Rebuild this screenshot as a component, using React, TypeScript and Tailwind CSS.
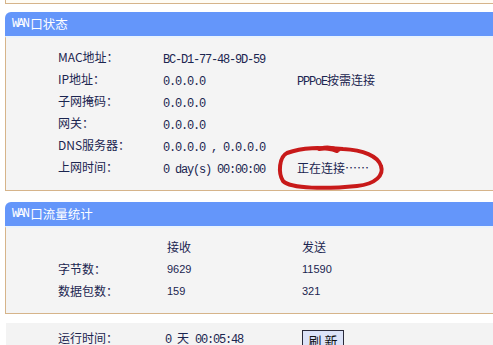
import type { ReactNode } from 'react';

const CJK = "font-['Noto_Sans_CJK_SC',sans-serif]";
const MONO = "font-['Liberation_Mono','Noto_Sans_CJK_SC',monospace] text-[12px] tracking-[-1.2px]";

function Mono({ children }: { children: ReactNode }) {
  return <span className={MONO}>{children}</span>;
}

function Header({ title, cjk }: { title: string; cjk: string }) {
  return (
    <div className="h-[24px] rounded-tl-[6px] bg-[#6496fa] flex items-center pl-[7px] text-white">
      <span className="font-['Liberation_Mono',monospace] text-[12px] tracking-[-1.8px]">{title}</span>
      <span className={`${CJK} text-[12.5px] ml-[2px]`}>{cjk}</span>
    </div>
  );
}

function Row({ label, value, extra }: { label: ReactNode; value?: ReactNode; extra?: ReactNode }) {
  return (
    <div className="h-[22px] flex items-center">
      <div className={`w-[105px] ${CJK} text-[12px]`}>{label}</div>
      <div className="w-[134px]">{value}</div>
      <div>{extra}</div>
    </div>
  );
}

const WAN_ROWS: { label: string; value: string }[] = [
  { label: 'MAC地址：', value: 'BC-D1-77-48-9D-59' },
  { label: 'IP地址：', value: '0.0.0.0' },
  { label: '子网掩码：', value: '0.0.0.0' },
  { label: '网关：', value: '0.0.0.0' },
  { label: 'DNS服务器：', value: '0.0.0.0 , 0.0.0.0' },
  { label: '上网时间：', value: '0 day(s) 00:00:00' },
];

export default function App() {
  return (
    <div className="relative w-[493px] h-[345px] overflow-hidden bg-white text-[#1b2550]">
      {/* tail of the box above */}
      <div className="ml-[5px] w-[500px] h-[4px] border-l border-b border-[#d6b48a] bg-[#fffcf4]" />

      {/* WAN status */}
      <div className="ml-[5px] w-[500px] mt-[8px]">
        <Header title="WAN" cjk="口状态" />
        <div className="h-[155px] border-l border-b border-[#d6b48a] bg-[#f4f4f4] border-t-2 border-t-[#eaf3fc] pt-[8px] pl-[52px]">
          {WAN_ROWS.map((r, i) => (
            <Row
              key={r.label}
              label={r.label}
              value={<Mono>{r.value}</Mono>}
              extra={
                i === 1 ? (
                  <span>
                    <Mono>PPPoE</Mono>
                    <span className={`${CJK} text-[12px]`}>按需连接</span>
                  </span>
                ) : i === 5 ? (
                  <span className={`${CJK} text-[12px]`}>正在连接……</span>
                ) : null
              }
            />
          ))}
        </div>
      </div>

      {/* WAN traffic */}
      <div className="ml-[5px] w-[500px] mt-[11px]">
        <Header title="WAN" cjk="口流量统计" />
        <div className="h-[88px] border-l border-b border-[#d6b48a] bg-[#f4f4f4] border-t-2 border-t-[#eaf3fc] pt-[8px] pl-[52px] font-['Liberation_Sans',sans-serif] text-[11px]">
          <div className="h-[22px] flex items-center">
            <div className="w-[109px]" />
            <div className={`w-[135px] ${CJK} text-[12px]`}>接收</div>
            <div className={`${CJK} text-[12px]`}>发送</div>
          </div>
          <div className="h-[22px] flex items-center">
            <div className={`w-[109px] ${CJK} text-[12px]`}>字节数：</div>
            <div className="w-[135px]">9629</div>
            <div>11590</div>
          </div>
          <div className="h-[22px] flex items-center">
            <div className={`w-[109px] ${CJK} text-[12px]`}>数据包数：</div>
            <div className="w-[135px]">159</div>
            <div>321</div>
          </div>
        </div>
      </div>

      {/* uptime */}
      <div className="ml-[6px] w-[500px] mt-[9px] h-[40px] bg-[#f3f3f3] pl-[52px] pt-[6px] flex items-start">
        <div className={`w-[107px] ${CJK} text-[12px] leading-[14px] mt-[2px]`}>运行时间：</div>
        <div className="w-[137px] mt-[2px] leading-[13px]">
          <Mono>0 </Mono>
          <span className={`${CJK} text-[12px]`}>天</span>
          <Mono> 00:05:48</Mono>
        </div>
        <button className={`w-[42px] h-[20px] mt-[1px] border border-[#2a2a3a] bg-[#dce3f8] ${CJK} text-[13px] leading-[17px] text-[#111]`}>
          刷 新
        </button>
      </div>

      {/* red marker circle */}
      <svg className="absolute left-[275px] top-[142px]" width="114" height="50" viewBox="0 0 114 50" fill="none">
        <path
          d="M62 9 C48 4, 26 6, 12 11 C4 15, 3 31, 8 39 C16 47, 52 47, 82 44 C101 42, 109 33, 106 24 C103 14, 88 8, 68 7 C58 6, 50 6, 44 7"
          stroke="#c81a1a"
          strokeWidth="4"
          strokeLinecap="round"
        />
        <path d="M46 6 C52 4, 58 5, 64 8" stroke="#c81a1a" strokeWidth="3" strokeLinecap="round" />
      </svg>
    </div>
  );
}
